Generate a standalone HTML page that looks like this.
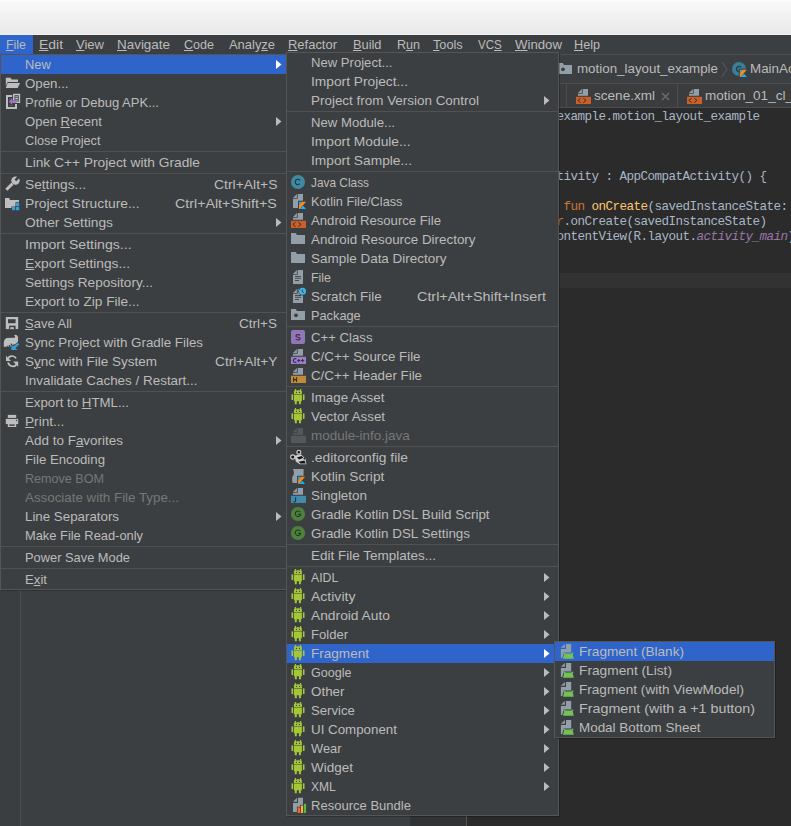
<!DOCTYPE html>
<html><head><meta charset="utf-8"><style>
html,body{margin:0;padding:0}
body{width:791px;height:826px;overflow:hidden;position:relative;background:#3c3f41}
.t{position:absolute;height:19px;line-height:19px;font-family:"Liberation Sans",sans-serif;font-size:13px;white-space:pre;transform-origin:0 0}
.t u{text-decoration:underline;text-decoration-thickness:1px;text-underline-offset:1px}
.code{position:absolute;left:472.5px;height:15px;line-height:15px;font-family:"Liberation Mono",monospace;font-size:12.6px;letter-spacing:-0.56px;white-space:pre;color:#a9b7c6}
</style></head><body>
<div style="position:absolute;left:0px;top:0px;width:791px;height:35px;background:linear-gradient(#fdfdfd 0px,#f9f9f9 2px,#e9e9e9 33px,#f0f0f0 34px,#f0f0f0 35px);"></div><div style="position:absolute;left:0px;top:35px;width:791px;height:20px;background:#3c3f41;"></div><div style="position:absolute;left:0px;top:54px;width:791px;height:1px;background:#4b4d4f;"></div><div style="position:absolute;left:0px;top:55px;width:410px;height:771px;background:#3c3f41;"></div><div style="position:absolute;left:20px;top:55px;width:1px;height:771px;background:#4a4c4e;"></div><div style="position:absolute;left:0px;top:55px;width:20px;height:771px;background:#3b3e40;"></div><div style="position:absolute;left:410px;top:55px;width:381px;height:28px;background:#3c3f41;"></div><div style="position:absolute;left:410px;top:83px;width:381px;height:1px;background:#4b4d4f;"></div><div style="position:absolute;left:410px;top:84px;width:381px;height:23px;background:#3a3c3e;"></div><div style="position:absolute;left:410px;top:107px;width:381px;height:1px;background:#4b4d4f;"></div><div style="position:absolute;left:410px;top:108px;width:56px;height:718px;background:#313335;"></div><div style="position:absolute;left:466px;top:108px;width:1px;height:718px;background:#555555;"></div><div style="position:absolute;left:467px;top:108px;width:324px;height:718px;background:#2b2b2b;"></div><div style="position:absolute;left:467px;top:273px;width:324px;height:15px;background:#323232;"></div><div style="position:absolute;left:566px;top:84px;width:1px;height:23px;background:#4b4d4f;"></div><div style="position:absolute;left:677px;top:84px;width:1px;height:23px;background:#4b4d4f;"></div><svg style="position:absolute;left:557px;top:61px;overflow:visible" width="16" height="16" viewBox="0 0 16 16"><path d="M1 1.9H5.9L6.9 3.9H15V12.9H1Z" fill="#939fa8"/><circle cx="6" cy="8.3" r="1.9" fill="#3c3f41"/></svg><div class="t" style="left:577px;top:59px;color:#bbbbbb;transform:scaleX(1.0269);">motion_layout_example</div><svg style="position:absolute;left:720px;top:61px" width="8" height="17"><path d="M2 1L7 8.4L2 15.7" fill="none" stroke="#5e6060" stroke-width="0.9"/></svg><svg style="position:absolute;left:731px;top:61px;overflow:visible" width="16" height="16" viewBox="0 0 16 16"><circle cx="8" cy="8" r="7" fill="#3b7f96"/><path d="M10 6.2A2.6 2.6 0 1 0 10 9.8" fill="none" stroke="#263c45" stroke-width="1.4"/><rect x="7.800000000000001" y="7.699999999999999" width="9" height="9.2" fill="#3c3f41"/><path d="M8.8 8.7H11.8L8.8 12.1Z" fill="#0fb5fd"/><path d="M11.8 8.7H15.8L9.600000000000001 15.899999999999999H8.8V12.1Z" fill="#f88a1e"/><path d="M9.600000000000001 15.899999999999999L13.0 12.7L15.8 15.899999999999999Z" fill="#0fb5fd"/></svg><div class="t" style="left:750px;top:59px;color:#bbbbbb;transform:scaleX(1.0300);">MainActivity</div><svg style="position:absolute;left:575px;top:88px;overflow:visible" width="16" height="16" viewBox="0 0 16 16"><path d="M3 4.9L6.9 1V4.9Z" fill="#939fa8"/><path d="M7.7 1H13V7.8H3V5.7H7.7Z" fill="#939fa8"/><rect x="1" y="8.8" width="15" height="7.2" fill="#c9602b"/><path d="M5.6 10.2L2.9 12.4L5.6 14.6M8.3 10.2L11 12.4L8.3 14.6" fill="none" stroke="#3b2418" stroke-width="0.9"/></svg><div class="t" style="left:594px;top:86px;color:#bbbbbb;transform:scaleX(1.0427);">scene.xml</div><svg style="position:absolute;left:661px;top:92px" width="9" height="9"><path d="M1 1L8 8M8 1L1 8" stroke="#6e7072" stroke-width="1.2"/></svg><svg style="position:absolute;left:686px;top:88px;overflow:visible" width="16" height="16" viewBox="0 0 16 16"><path d="M3 4.9L6.9 1V4.9Z" fill="#939fa8"/><path d="M7.7 1H13V7.8H3V5.7H7.7Z" fill="#939fa8"/><rect x="1" y="8.8" width="15" height="7.2" fill="#c9602b"/><path d="M5.6 10.2L2.9 12.4L5.6 14.6M8.3 10.2L11 12.4L8.3 14.6" fill="none" stroke="#3b2418" stroke-width="0.9"/></svg><div class="t" style="left:705px;top:86px;color:#bbbbbb;transform:scaleX(1.0400);">motion_01_cl_basic.xml</div><div class="code" style="top:110px"><span style="color:#cc7832">package </span>com.example.motion_layout_example</div><div class="code" style="top:170px"><span style="color:#cc7832">class </span>MainActivity : AppCompatActivity() {</div><div class="code" style="top:200px"><span style="color:#cc7832">    override fun </span><span style="color:#ffc66d">onCreate</span>(savedInstanceState: Bundle?) {</div><div class="code" style="top:215px"><span style="color:#cc7832">        super</span>.onCreate(savedInstanceState)</div><div class="code" style="top:230px">        setContentView(R.layout.<i style="color:#9876aa">activity_main</i>)</div><div style="position:absolute;left:0px;top:35px;width:33px;height:19px;background:#2f65ca;"></div><div class="t" style="left:6px;top:35px;color:#bbbbbb;transform:scaleX(0.9545);"><u>F</u>ile</div><div class="t" style="left:39px;top:35px;color:#bbbbbb;transform:scaleX(1.0711);"><u>E</u>dit</div><div class="t" style="left:76px;top:35px;color:#bbbbbb;transform:scaleX(1.0017);"><u>V</u>iew</div><div class="t" style="left:117px;top:35px;color:#bbbbbb;transform:scaleX(1.0329);"><u>N</u>avigate</div><div class="t" style="left:184px;top:35px;color:#bbbbbb;transform:scaleX(0.9653);"><u>C</u>ode</div><div class="t" style="left:229px;top:35px;color:#bbbbbb;transform:scaleX(0.9946);">Analy<u>z</u>e</div><div class="t" style="left:288px;top:35px;color:#bbbbbb;transform:scaleX(0.9971);"><u>R</u>efactor</div><div class="t" style="left:353px;top:35px;color:#bbbbbb;transform:scaleX(0.9854);"><u>B</u>uild</div><div class="t" style="left:397px;top:35px;color:#bbbbbb;transform:scaleX(0.9640);">R<u>u</u>n</div><div class="t" style="left:433px;top:35px;color:#bbbbbb;transform:scaleX(0.9783);"><u>T</u>ools</div><div class="t" style="left:478px;top:35px;color:#bbbbbb;transform:scaleX(0.8865);">VC<u>S</u></div><div class="t" style="left:515px;top:35px;color:#bbbbbb;transform:scaleX(1.0162);"><u>W</u>indow</div><div class="t" style="left:574px;top:35px;color:#bbbbbb;transform:scaleX(0.9720);"><u>H</u>elp</div><div style="position:absolute;left:0px;top:54px;width:285px;height:534px;background:#3c3f41;border:1px solid #555555;box-shadow:1px 1px 0 rgba(0,0,0,0.25)"></div><div style="position:absolute;left:1px;top:55px;width:285px;height:19px;background:#2f65ca;"></div><div class="t" style="left:25px;top:55px;color:#bbbbbb;transform:scaleX(0.9879);">New</div><svg style="position:absolute;left:276px;top:60px" width="6" height="9" viewBox="0 0 6 9"><path d="M0 0L5.5 4.5L0 9Z" fill="#ffffff"/></svg><svg style="position:absolute;left:5px;top:75px;overflow:visible" width="16" height="16" viewBox="0 0 16 16"><path d="M0.8 2.8H5.6L6.6 4.6H13V6.9H2.6L0.8 11Z" fill="#bebebe"/><path d="M2.6 7.9H15L12.7 13H0.8Z" fill="#bebebe"/></svg><div class="t" style="left:25px;top:74px;color:#bbbbbb;transform:scaleX(1.0202);">Open&#46;&#46;&#46;</div><svg style="position:absolute;left:5px;top:94px;overflow:visible" width="16" height="16" viewBox="0 0 16 16"><path fill-rule="evenodd" d="M1 1H12V15H1ZM3 3V13H10V3Z" fill="#bebebe"/><path d="M4 5H7M4 11.5H8" stroke="#5a5d5f" stroke-width="0.8"/><rect x="7.2" y="-1" width="9" height="11" fill="#3c3f41"/><path fill-rule="evenodd" d="M8 -0.3H15.2V9.1H8ZM9.5 1.2V7.6H13.7V1.2Z" fill="#bebebe"/><path d="M10.2 2.8H13M10.2 4.5H13M10.2 6.2H13" stroke="#bebebe" stroke-width="1"/><path d="M3.8 7.4L7.2 3.8V6H11.2V8.8H7.2V10.9Z" fill="#a06dc4"/></svg><div class="t" style="left:25px;top:93px;color:#bbbbbb;transform:scaleX(1.0023);">Profile or Debug APK&#46;&#46;&#46;</div><div class="t" style="left:25px;top:112px;color:#bbbbbb;transform:scaleX(1.0051);">Open <u>R</u>ecent</div><svg style="position:absolute;left:276px;top:117px" width="6" height="9" viewBox="0 0 6 9"><path d="M0 0L5.5 4.5L0 9Z" fill="#bbbbbb"/></svg><div class="t" style="left:25px;top:131px;color:#bbbbbb;transform:scaleX(0.9766);">Close Project</div><div style="position:absolute;left:1px;top:151px;width:285px;height:1px;background:#515151;"></div><div class="t" style="left:25px;top:153px;color:#bbbbbb;transform:scaleX(1.0576);">Link C++ Project with Gradle</div><div style="position:absolute;left:1px;top:173px;width:285px;height:1px;background:#515151;"></div><svg style="position:absolute;left:5px;top:176px;overflow:visible" width="16" height="16" viewBox="0 0 16 16"><path d="M1.3 13.8L7.5 7.6" stroke="#bebebe" stroke-width="2.9"/><circle cx="10.5" cy="4.6" r="4.2" fill="#bebebe"/><path d="M9.48 3.38L14.08 -1.22L15.92 0.62L11.32 5.22Z" fill="#3c3f41"/></svg><div class="t" style="left:25px;top:175px;color:#bbbbbb;transform:scaleX(1.0551);">Se<u>t</u>tings&#46;&#46;&#46;</div><div class="t" style="left:213.5px;top:175px;color:#bbbbbb;transform:scaleX(1.0717)">Ctrl+Alt+S</div><svg style="position:absolute;left:5px;top:195px;overflow:visible" width="16" height="16" viewBox="0 0 16 16"><path d="M0 3H4.2L5 5H14V7.3H10.5V11.5H6.5V13H0Z" fill="#bebebe"/><rect x="11" y="8" width="3.2" height="3.2" fill="#389fd6"/><rect x="7" y="12" width="3.2" height="3.2" fill="#389fd6"/><rect x="11" y="12" width="3.2" height="3.2" fill="#389fd6"/></svg><div class="t" style="left:25px;top:194px;color:#bbbbbb;transform:scaleX(1.0636);">Project Structure&#46;&#46;&#46;</div><div class="t" style="left:175.3px;top:194px;color:#bbbbbb;transform:scaleX(1.0952)">Ctrl+Alt+Shift+S</div><div class="t" style="left:25px;top:213px;color:#bbbbbb;transform:scaleX(1.0588);">Other Settings</div><svg style="position:absolute;left:276px;top:218px" width="6" height="9" viewBox="0 0 6 9"><path d="M0 0L5.5 4.5L0 9Z" fill="#bbbbbb"/></svg><div style="position:absolute;left:1px;top:233px;width:285px;height:1px;background:#515151;"></div><div class="t" style="left:25px;top:235px;color:#bbbbbb;transform:scaleX(1.0848);">Import Settings&#46;&#46;&#46;</div><div class="t" style="left:25px;top:254px;color:#bbbbbb;transform:scaleX(1.0606);"><u>E</u>xport Settings&#46;&#46;&#46;</div><div class="t" style="left:25px;top:273px;color:#bbbbbb;transform:scaleX(1.0441);">Settings Repository&#46;&#46;&#46;</div><div class="t" style="left:25px;top:292px;color:#bbbbbb;transform:scaleX(1.0496);">Export to Zip File&#46;&#46;&#46;</div><div style="position:absolute;left:1px;top:312px;width:285px;height:1px;background:#515151;"></div><svg style="position:absolute;left:5px;top:315px;overflow:visible" width="16" height="16" viewBox="0 0 16 16"><rect x="0.8" y="2" width="12.4" height="12.1" fill="#bebebe"/><rect x="3" y="4.2" width="7.6" height="4" fill="#3c3f41"/><rect x="4.1" y="10.7" width="6.5" height="3.4" fill="#3c3f41"/><rect x="5.2" y="12.2" width="3.6" height="1.9" fill="#bebebe"/></svg><div class="t" style="left:25px;top:314px;color:#bbbbbb;transform:scaleX(1.0003);"><u>S</u>ave All</div><div class="t" style="left:239.0px;top:314px;color:#bbbbbb;transform:scaleX(1.0415)">Ctrl+S</div><svg style="position:absolute;left:4px;top:334px;overflow:visible" width="16" height="16" viewBox="0 0 16 16"><path d="M-0.2 12.7L-0.2 8Q0 5 2.6 4L10.6 3.8Q11.3 3.2 11 2.2Q10.4 1.5 9.8 1.9Q10.8 0.5 12.3 0.9Q14.2 1.5 14.1 4L13.9 9L11.7 10.4L9.2 10.4V11.5L8 12.7H6.2V11H4.8V12.7H4L3.2 11.6L2.6 12.7Z" fill="#bebebe"/><path d="M7.4 10.4L9.5 12.4L13.6 8.8L15.2 10.4L11.3 14.2L13.6 15.9H7.4Z" fill="#389fd6" stroke="#3c3f41" stroke-width="1.2" paint-order="stroke"/></svg><div class="t" style="left:25px;top:333px;color:#bbbbbb;transform:scaleX(1.0265);">Sync Project with Gradle Files</div><svg style="position:absolute;left:5px;top:353px;overflow:visible" width="16" height="16" viewBox="0 0 16 16"><g transform="translate(0.5 0.4)"><path d="M2.6 9A4.7 4.7 0 0 0 11.3 10.6" fill="none" stroke="#bebebe" stroke-width="1.7"/><path d="M10.6 5A4.7 4.7 0 0 0 1.9 6.4" fill="none" stroke="#bebebe" stroke-width="1.7"/><path d="M0.5 2.3V7.6H5.6Z" fill="#bebebe"/><path d="M12.7 13.5V8.2H7.6Z" fill="#bebebe"/></g></svg><div class="t" style="left:25px;top:352px;color:#bbbbbb;transform:scaleX(1.0381);">S<u>y</u>nc with File System</div><div class="t" style="left:214.5px;top:352px;color:#bbbbbb;transform:scaleX(1.0549)">Ctrl+Alt+Y</div><div class="t" style="left:25px;top:371px;color:#bbbbbb;transform:scaleX(1.0334);">Invalidate Caches / Restart&#46;&#46;&#46;</div><div style="position:absolute;left:1px;top:391px;width:285px;height:1px;background:#515151;"></div><div class="t" style="left:25px;top:393px;color:#bbbbbb;transform:scaleX(1.0209);">Export to <u>H</u>TML&#46;&#46;&#46;</div><svg style="position:absolute;left:5px;top:413px;overflow:visible" width="16" height="16" viewBox="0 0 16 16"><rect x="2.8" y="1.9" width="8.4" height="3" fill="#bebebe"/><rect x="0.8" y="5.9" width="12.4" height="5.1" fill="#bebebe"/><rect x="2.8" y="10.5" width="8.4" height="3.5" fill="#bebebe"/><rect x="4.3" y="11.4" width="5.4" height="1.4" fill="#3c3f41"/><circle cx="11.5" cy="7.5" r="0.7" fill="#3c3f41"/></svg><div class="t" style="left:25px;top:412px;color:#bbbbbb;transform:scaleX(1.0485);"><u>P</u>rint&#46;&#46;&#46;</div><div class="t" style="left:25px;top:431px;color:#bbbbbb;transform:scaleX(1.0353);">Add to F<u>a</u>vorites</div><svg style="position:absolute;left:276px;top:436px" width="6" height="9" viewBox="0 0 6 9"><path d="M0 0L5.5 4.5L0 9Z" fill="#bbbbbb"/></svg><div class="t" style="left:25px;top:450px;color:#bbbbbb;transform:scaleX(1.0155);">File Encoding</div><div class="t" style="left:25px;top:469px;color:#777777;transform:scaleX(0.9677);">Remove BOM</div><div class="t" style="left:25px;top:488px;color:#777777;transform:scaleX(1.0263);">Associate with File Type&#46;&#46;&#46;</div><div class="t" style="left:25px;top:507px;color:#bbbbbb;transform:scaleX(1.0242);">Line Separators</div><svg style="position:absolute;left:276px;top:512px" width="6" height="9" viewBox="0 0 6 9"><path d="M0 0L5.5 4.5L0 9Z" fill="#bbbbbb"/></svg><div class="t" style="left:25px;top:526px;color:#bbbbbb;transform:scaleX(0.9898);">Make File Read-only</div><div style="position:absolute;left:1px;top:546px;width:285px;height:1px;background:#515151;"></div><div class="t" style="left:25px;top:548px;color:#bbbbbb;transform:scaleX(0.9884);">Power Save Mode</div><div style="position:absolute;left:1px;top:568px;width:285px;height:1px;background:#515151;"></div><div class="t" style="left:25px;top:570px;color:#bbbbbb;transform:scaleX(1.0151);">E<u>x</u>it</div><div style="position:absolute;left:286px;top:52px;width:271px;height:762px;background:#3c3f41;border:1px solid #555555;box-shadow:1px 1px 0 rgba(0,0,0,0.25)"></div><div class="t" style="left:311px;top:53px;color:#bbbbbb;transform:scaleX(1.0071);">New Project&#46;&#46;&#46;</div><div class="t" style="left:311px;top:72px;color:#bbbbbb;transform:scaleX(1.0572);">Import Project&#46;&#46;&#46;</div><div class="t" style="left:311px;top:91px;color:#bbbbbb;transform:scaleX(1.0333);">Project from Version Control</div><svg style="position:absolute;left:544px;top:96px" width="6" height="9" viewBox="0 0 6 9"><path d="M0 0L5.5 4.5L0 9Z" fill="#bbbbbb"/></svg><div style="position:absolute;left:287px;top:111px;width:271px;height:1px;background:#515151;"></div><div class="t" style="left:311px;top:113px;color:#bbbbbb;transform:scaleX(1.0109);">New Module&#46;&#46;&#46;</div><div class="t" style="left:311px;top:132px;color:#bbbbbb;transform:scaleX(1.0592);">Import Module&#46;&#46;&#46;</div><div class="t" style="left:311px;top:151px;color:#bbbbbb;transform:scaleX(1.0590);">Import Sample&#46;&#46;&#46;</div><div style="position:absolute;left:287px;top:171px;width:271px;height:1px;background:#515151;"></div><svg style="position:absolute;left:290px;top:174px;overflow:visible" width="16" height="16" viewBox="0 0 16 16"><circle cx="8" cy="8" r="7" fill="#3f8aa2"/><path d="M9.9 6.3A2.6 2.7 0 1 0 9.9 9.7" fill="none" stroke="#1f3a44" stroke-width="1.15"/></svg><div class="t" style="left:311px;top:173px;color:#bbbbbb;transform:scaleX(0.9123);">Java Class</div><svg style="position:absolute;left:290px;top:193px;overflow:visible" width="16" height="16" viewBox="0 0 16 16"><path d="M3 4.9L6.9 1V4.9Z" fill="#939fa8"/><path d="M7.7 1H13V15H3V5.7H7.7Z" fill="#939fa8"/><rect x="8" y="7.699999999999999" width="9" height="9.2" fill="#3c3f41"/><path d="M9 8.7H12L9 12.1Z" fill="#0fb5fd"/><path d="M12 8.7H16L9.8 15.899999999999999H9V12.1Z" fill="#f88a1e"/><path d="M9.8 15.899999999999999L13.2 12.7L16 15.899999999999999Z" fill="#0fb5fd"/></svg><div class="t" style="left:311px;top:192px;color:#bbbbbb;transform:scaleX(0.9817);">Kotlin File/Class</div><svg style="position:absolute;left:290px;top:212px;overflow:visible" width="16" height="16" viewBox="0 0 16 16"><path d="M3 4.9L6.9 1V4.9Z" fill="#939fa8"/><path d="M7.7 1H13V7.8H3V5.7H7.7Z" fill="#939fa8"/><rect x="1" y="8.8" width="15" height="7.2" fill="#c9602b"/><path d="M5.6 10.2L2.9 12.4L5.6 14.6M8.3 10.2L11 12.4L8.3 14.6" fill="none" stroke="#3b2418" stroke-width="0.9"/></svg><div class="t" style="left:311px;top:211px;color:#bbbbbb;transform:scaleX(1.0107);">Android Resource File</div><svg style="position:absolute;left:290px;top:231px;overflow:visible" width="16" height="16" viewBox="0 0 16 16"><path d="M1 1.9H5.9L6.9 3.9H15V12.9H1Z" fill="#939fa8"/></svg><div class="t" style="left:311px;top:230px;color:#bbbbbb;transform:scaleX(1.0301);">Android Resource Directory</div><svg style="position:absolute;left:290px;top:250px;overflow:visible" width="16" height="16" viewBox="0 0 16 16"><path d="M1 1.9H5.9L6.9 3.9H15V12.9H1Z" fill="#939fa8"/></svg><div class="t" style="left:311px;top:249px;color:#bbbbbb;transform:scaleX(1.0361);">Sample Data Directory</div><svg style="position:absolute;left:290px;top:269px;overflow:visible" width="16" height="16" viewBox="0 0 16 16"><path d="M3 4.9L6.9 1V4.9Z" fill="#939fa8"/><path d="M7.7 1H13V15H3V5.7H7.7Z" fill="#939fa8"/><path d="M5 7.5H11M5 9.3H11M5 11.5H9" stroke="#3c3f41" stroke-width="0.9"/></svg><div class="t" style="left:311px;top:268px;color:#bbbbbb;transform:scaleX(0.9545);">File</div><svg style="position:absolute;left:290px;top:288px;overflow:visible" width="16" height="16" viewBox="0 0 16 16"><path d="M3 4.9L6.9 1V4.9Z" fill="#939fa8"/><path d="M7.7 1H13V15H3V5.7H7.7Z" fill="#939fa8"/><path d="M5 7.5H11M5 9.3H11M5 11.5H9" stroke="#3c3f41" stroke-width="0.9"/><circle cx="12.5" cy="3.3" r="4.2" fill="#3c3f41"/><circle cx="12.5" cy="3.3" r="3.5" fill="#40b6e0"/><path d="M12.3 1.5V3.6L13.8 4.6" fill="none" stroke="#1d3440" stroke-width="0.9"/></svg><div class="t" style="left:311px;top:287px;color:#bbbbbb;transform:scaleX(1.0300);">Scratch File</div><div class="t" style="left:417.0px;top:287px;color:#bbbbbb;transform:scaleX(1.1054)">Ctrl+Alt+Shift+Insert</div><svg style="position:absolute;left:290px;top:307px;overflow:visible" width="16" height="16" viewBox="0 0 16 16"><path d="M1 1.9H5.9L6.9 3.9H15V12.9H1Z" fill="#939fa8"/><circle cx="6" cy="8.3" r="1.9" fill="#3c3f41"/></svg><div class="t" style="left:311px;top:306px;color:#bbbbbb;transform:scaleX(0.9823);">Package</div><div style="position:absolute;left:287px;top:326px;width:271px;height:1px;background:#515151;"></div><svg style="position:absolute;left:290px;top:329px;overflow:visible" width="16" height="16" viewBox="0 0 16 16"><rect x="1" y="1" width="14" height="14" rx="2" fill="#9277b8"/><path d="M10.1 6.4Q9.5 5.6 8 5.6Q5.9 5.6 5.9 7Q5.9 8.1 8 8.3Q10.2 8.5 10.2 9.6Q10.2 10.9 8 10.9Q6.3 10.9 5.7 10" fill="none" stroke="#3a2b4f" stroke-width="1.15"/></svg><div class="t" style="left:311px;top:328px;color:#bbbbbb;transform:scaleX(1.0131);">C++ Class</div><svg style="position:absolute;left:290px;top:348px;overflow:visible" width="16" height="16" viewBox="0 0 16 16"><path d="M3 4.9L6.9 1V4.9Z" fill="#939fa8"/><path d="M7.7 1H13V7.8H3V5.7H7.7Z" fill="#939fa8"/><rect x="1" y="8.8" width="15" height="7.2" fill="#9b80c8"/><path d="M6.4 11.2A1.8 1.9 0 1 0 6.4 13.9" fill="none" stroke="#3b2e4a" stroke-width="1.2"/><path d="M7.2 12.6H10.4M8.8 11V14.2M11 12.6H14.2M12.6 11V14.2" stroke="#3b2e4a" stroke-width="1"/></svg><div class="t" style="left:311px;top:347px;color:#bbbbbb;transform:scaleX(1.0240);">C/C++ Source File</div><svg style="position:absolute;left:290px;top:367px;overflow:visible" width="16" height="16" viewBox="0 0 16 16"><path d="M3 4.9L6.9 1V4.9Z" fill="#939fa8"/><path d="M7.7 1H13V7.8H3V5.7H7.7Z" fill="#939fa8"/><rect x="1" y="8.8" width="15" height="7.2" fill="#bf8a3a"/><path d="M3.6 10.3V14.9M6.5 10.3V14.9M3.6 12.6H6.5" stroke="#3f2d10" stroke-width="1.1"/></svg><div class="t" style="left:311px;top:366px;color:#bbbbbb;transform:scaleX(1.0241);">C/C++ Header File</div><div style="position:absolute;left:287px;top:386px;width:271px;height:1px;background:#515151;"></div><svg style="position:absolute;left:290px;top:389px;overflow:visible" width="16" height="16" viewBox="0 0 16 16"><rect x="4.8" y="0" width="1.3" height="2.4" fill="#a4c639"/><rect x="9.9" y="0" width="1.3" height="2.4" fill="#a4c639"/><path d="M3.9 5.1V2.6Q3.9 1.5 5 1.5H7L8 1H8.2L9 1.5H10.8Q11.9 1.5 11.9 2.6V5.1Z" fill="#a4c639"/><circle cx="6.5" cy="3.4" r="0.6" fill="#3c3f41"/><circle cx="9.5" cy="3.4" r="0.6" fill="#3c3f41"/><path d="M3.9 5.6H11.9V12.2H10.9V15.2H8.9V12.2H6.8V15.2H4.8V12.2H3.9Z" fill="#a4c639"/><rect x="1.5" y="5.2" width="1.6" height="5.8" rx="0.5" fill="#a4c639"/><rect x="12.9" y="5.2" width="1.6" height="5.8" rx="0.5" fill="#a4c639"/></svg><div class="t" style="left:311px;top:388px;color:#bbbbbb;transform:scaleX(1.0259);">Image Asset</div><svg style="position:absolute;left:290px;top:408px;overflow:visible" width="16" height="16" viewBox="0 0 16 16"><rect x="4.8" y="0" width="1.3" height="2.4" fill="#a4c639"/><rect x="9.9" y="0" width="1.3" height="2.4" fill="#a4c639"/><path d="M3.9 5.1V2.6Q3.9 1.5 5 1.5H7L8 1H8.2L9 1.5H10.8Q11.9 1.5 11.9 2.6V5.1Z" fill="#a4c639"/><circle cx="6.5" cy="3.4" r="0.6" fill="#3c3f41"/><circle cx="9.5" cy="3.4" r="0.6" fill="#3c3f41"/><path d="M3.9 5.6H11.9V12.2H10.9V15.2H8.9V12.2H6.8V15.2H4.8V12.2H3.9Z" fill="#a4c639"/><rect x="1.5" y="5.2" width="1.6" height="5.8" rx="0.5" fill="#a4c639"/><rect x="12.9" y="5.2" width="1.6" height="5.8" rx="0.5" fill="#a4c639"/></svg><div class="t" style="left:311px;top:407px;color:#bbbbbb;transform:scaleX(1.0240);">Vector Asset</div><svg style="position:absolute;left:290px;top:427px;overflow:visible" width="16" height="16" viewBox="0 0 16 16"><path d="M3 4.9L6.9 1V4.9Z" fill="#55585a"/><path d="M7.7 1H13V7.8H3V5.7H7.7Z" fill="#55585a"/><rect x="1" y="8.8" width="15" height="7.2" fill="#55585a"/></svg><div class="t" style="left:311px;top:426px;color:#777777;transform:scaleX(1.0347);">module-info.java</div><div style="position:absolute;left:287px;top:446px;width:271px;height:1px;background:#515151;"></div><svg style="position:absolute;left:290px;top:449px;overflow:visible" width="16" height="16" viewBox="0 0 16 16"><path d="M4.6 6.8L10.8 5.2L15.4 9.4L16.4 15.2L9.8 15.3L5.8 12.6Z" fill="#cfcfcf"/><circle cx="2.7" cy="8" r="2.1" fill="#151515" stroke="#c8c8c8" stroke-width="1.2"/><circle cx="8.8" cy="3.3" r="1.9" fill="#151515" stroke="#c8c8c8" stroke-width="1.2"/><path d="M6.8 8.6L11.6 7L13.4 8.8L9.2 10.6Z" fill="#151515"/><path d="M8.6 12.8L14.4 11.4L15.8 14.4H10.4Z" fill="#151515"/><circle cx="14.4" cy="9.6" r="0.9" fill="#151515"/></svg><div class="t" style="left:311px;top:448px;color:#bbbbbb;transform:scaleX(1.0652);">.editorconfig file</div><svg style="position:absolute;left:290px;top:467px;overflow:visible" width="16" height="16" viewBox="0 0 16 16"><path d="M2.8 1.9H13.6V9H7.9V16H3.4Q2.2 16 2.2 14.6V11.2Q2.2 9.6 3.3 8.3Q4.2 7 3.8 4.6Q3.5 3 2.8 1.9Z" fill="#939fa8"/><rect x="7.1" y="8.8" width="9" height="9.2" fill="#3c3f41"/><path d="M8.1 9.8H11.1L8.1 13.200000000000001Z" fill="#0fb5fd"/><path d="M11.1 9.8H15.1L8.9 17.0H8.1V13.200000000000001Z" fill="#f88a1e"/><path d="M8.9 17.0L12.3 13.8L15.1 17.0Z" fill="#0fb5fd"/></svg><div class="t" style="left:311px;top:467px;color:#bbbbbb;transform:scaleX(1.0580);">Kotlin Script</div><svg style="position:absolute;left:290px;top:487px;overflow:visible" width="16" height="16" viewBox="0 0 16 16"><path d="M3 4.9L6.9 1V4.9Z" fill="#939fa8"/><path d="M7.7 1H13V7.8H3V5.7H7.7Z" fill="#939fa8"/><rect x="1" y="8.8" width="15" height="7.2" fill="#3f8cac"/><path d="M5.6 10.3V13.8Q5.6 14.9 4.5 14.9H3.4" fill="none" stroke="#1d3440" stroke-width="1.1"/></svg><div class="t" style="left:311px;top:486px;color:#bbbbbb;transform:scaleX(1.0329);">Singleton</div><svg style="position:absolute;left:290px;top:506px;overflow:visible" width="16" height="16" viewBox="0 0 16 16"><circle cx="8" cy="8" r="7.1" fill="#4e8040"/><path d="M10.3 6.1A2.75 2.75 0 1 0 10.75 8.3H8.2" fill="none" stroke="#243a1d" stroke-width="1.15"/></svg><div class="t" style="left:311px;top:505px;color:#bbbbbb;transform:scaleX(1.0327);">Gradle Kotlin DSL Build Script</div><svg style="position:absolute;left:290px;top:525px;overflow:visible" width="16" height="16" viewBox="0 0 16 16"><circle cx="8" cy="8" r="7.1" fill="#4e8040"/><path d="M10.3 6.1A2.75 2.75 0 1 0 10.75 8.3H8.2" fill="none" stroke="#243a1d" stroke-width="1.15"/></svg><div class="t" style="left:311px;top:524px;color:#bbbbbb;transform:scaleX(1.0314);">Gradle Kotlin DSL Settings</div><div style="position:absolute;left:287px;top:544px;width:271px;height:1px;background:#515151;"></div><div class="t" style="left:311px;top:546px;color:#bbbbbb;transform:scaleX(1.0380);">Edit File Templates&#46;&#46;&#46;</div><div style="position:absolute;left:287px;top:566px;width:271px;height:1px;background:#515151;"></div><svg style="position:absolute;left:290px;top:569px;overflow:visible" width="16" height="16" viewBox="0 0 16 16"><rect x="4.8" y="0" width="1.3" height="2.4" fill="#a4c639"/><rect x="9.9" y="0" width="1.3" height="2.4" fill="#a4c639"/><path d="M3.9 5.1V2.6Q3.9 1.5 5 1.5H7L8 1H8.2L9 1.5H10.8Q11.9 1.5 11.9 2.6V5.1Z" fill="#a4c639"/><circle cx="6.5" cy="3.4" r="0.6" fill="#3c3f41"/><circle cx="9.5" cy="3.4" r="0.6" fill="#3c3f41"/><path d="M3.9 5.6H11.9V12.2H10.9V15.2H8.9V12.2H6.8V15.2H4.8V12.2H3.9Z" fill="#a4c639"/><rect x="1.5" y="5.2" width="1.6" height="5.8" rx="0.5" fill="#a4c639"/><rect x="12.9" y="5.2" width="1.6" height="5.8" rx="0.5" fill="#a4c639"/></svg><div class="t" style="left:311px;top:568px;color:#bbbbbb;transform:scaleX(0.9444);">AIDL</div><svg style="position:absolute;left:544px;top:573px" width="6" height="9" viewBox="0 0 6 9"><path d="M0 0L5.5 4.5L0 9Z" fill="#bbbbbb"/></svg><svg style="position:absolute;left:290px;top:588px;overflow:visible" width="16" height="16" viewBox="0 0 16 16"><rect x="4.8" y="0" width="1.3" height="2.4" fill="#a4c639"/><rect x="9.9" y="0" width="1.3" height="2.4" fill="#a4c639"/><path d="M3.9 5.1V2.6Q3.9 1.5 5 1.5H7L8 1H8.2L9 1.5H10.8Q11.9 1.5 11.9 2.6V5.1Z" fill="#a4c639"/><circle cx="6.5" cy="3.4" r="0.6" fill="#3c3f41"/><circle cx="9.5" cy="3.4" r="0.6" fill="#3c3f41"/><path d="M3.9 5.6H11.9V12.2H10.9V15.2H8.9V12.2H6.8V15.2H4.8V12.2H3.9Z" fill="#a4c639"/><rect x="1.5" y="5.2" width="1.6" height="5.8" rx="0.5" fill="#a4c639"/><rect x="12.9" y="5.2" width="1.6" height="5.8" rx="0.5" fill="#a4c639"/></svg><div class="t" style="left:311px;top:587px;color:#bbbbbb;transform:scaleX(1.0784);">Activity</div><svg style="position:absolute;left:544px;top:592px" width="6" height="9" viewBox="0 0 6 9"><path d="M0 0L5.5 4.5L0 9Z" fill="#bbbbbb"/></svg><svg style="position:absolute;left:290px;top:607px;overflow:visible" width="16" height="16" viewBox="0 0 16 16"><rect x="4.8" y="0" width="1.3" height="2.4" fill="#a4c639"/><rect x="9.9" y="0" width="1.3" height="2.4" fill="#a4c639"/><path d="M3.9 5.1V2.6Q3.9 1.5 5 1.5H7L8 1H8.2L9 1.5H10.8Q11.9 1.5 11.9 2.6V5.1Z" fill="#a4c639"/><circle cx="6.5" cy="3.4" r="0.6" fill="#3c3f41"/><circle cx="9.5" cy="3.4" r="0.6" fill="#3c3f41"/><path d="M3.9 5.6H11.9V12.2H10.9V15.2H8.9V12.2H6.8V15.2H4.8V12.2H3.9Z" fill="#a4c639"/><rect x="1.5" y="5.2" width="1.6" height="5.8" rx="0.5" fill="#a4c639"/><rect x="12.9" y="5.2" width="1.6" height="5.8" rx="0.5" fill="#a4c639"/></svg><div class="t" style="left:311px;top:606px;color:#bbbbbb;transform:scaleX(1.0611);">Android Auto</div><svg style="position:absolute;left:544px;top:611px" width="6" height="9" viewBox="0 0 6 9"><path d="M0 0L5.5 4.5L0 9Z" fill="#bbbbbb"/></svg><svg style="position:absolute;left:290px;top:626px;overflow:visible" width="16" height="16" viewBox="0 0 16 16"><rect x="4.8" y="0" width="1.3" height="2.4" fill="#a4c639"/><rect x="9.9" y="0" width="1.3" height="2.4" fill="#a4c639"/><path d="M3.9 5.1V2.6Q3.9 1.5 5 1.5H7L8 1H8.2L9 1.5H10.8Q11.9 1.5 11.9 2.6V5.1Z" fill="#a4c639"/><circle cx="6.5" cy="3.4" r="0.6" fill="#3c3f41"/><circle cx="9.5" cy="3.4" r="0.6" fill="#3c3f41"/><path d="M3.9 5.6H11.9V12.2H10.9V15.2H8.9V12.2H6.8V15.2H4.8V12.2H3.9Z" fill="#a4c639"/><rect x="1.5" y="5.2" width="1.6" height="5.8" rx="0.5" fill="#a4c639"/><rect x="12.9" y="5.2" width="1.6" height="5.8" rx="0.5" fill="#a4c639"/></svg><div class="t" style="left:311px;top:625px;color:#bbbbbb;transform:scaleX(1.0038);">Folder</div><svg style="position:absolute;left:544px;top:630px" width="6" height="9" viewBox="0 0 6 9"><path d="M0 0L5.5 4.5L0 9Z" fill="#bbbbbb"/></svg><div style="position:absolute;left:287px;top:644px;width:271px;height:19px;background:#2f65ca;"></div><svg style="position:absolute;left:290px;top:645px;overflow:visible" width="16" height="16" viewBox="0 0 16 16"><rect x="4.8" y="0" width="1.3" height="2.4" fill="#a4c639"/><rect x="9.9" y="0" width="1.3" height="2.4" fill="#a4c639"/><path d="M3.9 5.1V2.6Q3.9 1.5 5 1.5H7L8 1H8.2L9 1.5H10.8Q11.9 1.5 11.9 2.6V5.1Z" fill="#a4c639"/><circle cx="6.5" cy="3.4" r="0.6" fill="#3c3f41"/><circle cx="9.5" cy="3.4" r="0.6" fill="#3c3f41"/><path d="M3.9 5.6H11.9V12.2H10.9V15.2H8.9V12.2H6.8V15.2H4.8V12.2H3.9Z" fill="#a4c639"/><rect x="1.5" y="5.2" width="1.6" height="5.8" rx="0.5" fill="#a4c639"/><rect x="12.9" y="5.2" width="1.6" height="5.8" rx="0.5" fill="#a4c639"/></svg><div class="t" style="left:311px;top:644px;color:#bbbbbb;transform:scaleX(1.0424);">Fragment</div><svg style="position:absolute;left:544px;top:649px" width="6" height="9" viewBox="0 0 6 9"><path d="M0 0L5.5 4.5L0 9Z" fill="#ffffff"/></svg><svg style="position:absolute;left:290px;top:664px;overflow:visible" width="16" height="16" viewBox="0 0 16 16"><rect x="4.8" y="0" width="1.3" height="2.4" fill="#a4c639"/><rect x="9.9" y="0" width="1.3" height="2.4" fill="#a4c639"/><path d="M3.9 5.1V2.6Q3.9 1.5 5 1.5H7L8 1H8.2L9 1.5H10.8Q11.9 1.5 11.9 2.6V5.1Z" fill="#a4c639"/><circle cx="6.5" cy="3.4" r="0.6" fill="#3c3f41"/><circle cx="9.5" cy="3.4" r="0.6" fill="#3c3f41"/><path d="M3.9 5.6H11.9V12.2H10.9V15.2H8.9V12.2H6.8V15.2H4.8V12.2H3.9Z" fill="#a4c639"/><rect x="1.5" y="5.2" width="1.6" height="5.8" rx="0.5" fill="#a4c639"/><rect x="12.9" y="5.2" width="1.6" height="5.8" rx="0.5" fill="#a4c639"/></svg><div class="t" style="left:311px;top:663px;color:#bbbbbb;transform:scaleX(0.9661);">Google</div><svg style="position:absolute;left:544px;top:668px" width="6" height="9" viewBox="0 0 6 9"><path d="M0 0L5.5 4.5L0 9Z" fill="#bbbbbb"/></svg><svg style="position:absolute;left:290px;top:683px;overflow:visible" width="16" height="16" viewBox="0 0 16 16"><rect x="4.8" y="0" width="1.3" height="2.4" fill="#a4c639"/><rect x="9.9" y="0" width="1.3" height="2.4" fill="#a4c639"/><path d="M3.9 5.1V2.6Q3.9 1.5 5 1.5H7L8 1H8.2L9 1.5H10.8Q11.9 1.5 11.9 2.6V5.1Z" fill="#a4c639"/><circle cx="6.5" cy="3.4" r="0.6" fill="#3c3f41"/><circle cx="9.5" cy="3.4" r="0.6" fill="#3c3f41"/><path d="M3.9 5.6H11.9V12.2H10.9V15.2H8.9V12.2H6.8V15.2H4.8V12.2H3.9Z" fill="#a4c639"/><rect x="1.5" y="5.2" width="1.6" height="5.8" rx="0.5" fill="#a4c639"/><rect x="12.9" y="5.2" width="1.6" height="5.8" rx="0.5" fill="#a4c639"/></svg><div class="t" style="left:311px;top:682px;color:#bbbbbb;transform:scaleX(1.0303);">Other</div><svg style="position:absolute;left:544px;top:687px" width="6" height="9" viewBox="0 0 6 9"><path d="M0 0L5.5 4.5L0 9Z" fill="#bbbbbb"/></svg><svg style="position:absolute;left:290px;top:702px;overflow:visible" width="16" height="16" viewBox="0 0 16 16"><rect x="4.8" y="0" width="1.3" height="2.4" fill="#a4c639"/><rect x="9.9" y="0" width="1.3" height="2.4" fill="#a4c639"/><path d="M3.9 5.1V2.6Q3.9 1.5 5 1.5H7L8 1H8.2L9 1.5H10.8Q11.9 1.5 11.9 2.6V5.1Z" fill="#a4c639"/><circle cx="6.5" cy="3.4" r="0.6" fill="#3c3f41"/><circle cx="9.5" cy="3.4" r="0.6" fill="#3c3f41"/><path d="M3.9 5.6H11.9V12.2H10.9V15.2H8.9V12.2H6.8V15.2H4.8V12.2H3.9Z" fill="#a4c639"/><rect x="1.5" y="5.2" width="1.6" height="5.8" rx="0.5" fill="#a4c639"/><rect x="12.9" y="5.2" width="1.6" height="5.8" rx="0.5" fill="#a4c639"/></svg><div class="t" style="left:311px;top:701px;color:#bbbbbb;transform:scaleX(1.0102);">Service</div><svg style="position:absolute;left:544px;top:706px" width="6" height="9" viewBox="0 0 6 9"><path d="M0 0L5.5 4.5L0 9Z" fill="#bbbbbb"/></svg><svg style="position:absolute;left:290px;top:721px;overflow:visible" width="16" height="16" viewBox="0 0 16 16"><rect x="4.8" y="0" width="1.3" height="2.4" fill="#a4c639"/><rect x="9.9" y="0" width="1.3" height="2.4" fill="#a4c639"/><path d="M3.9 5.1V2.6Q3.9 1.5 5 1.5H7L8 1H8.2L9 1.5H10.8Q11.9 1.5 11.9 2.6V5.1Z" fill="#a4c639"/><circle cx="6.5" cy="3.4" r="0.6" fill="#3c3f41"/><circle cx="9.5" cy="3.4" r="0.6" fill="#3c3f41"/><path d="M3.9 5.6H11.9V12.2H10.9V15.2H8.9V12.2H6.8V15.2H4.8V12.2H3.9Z" fill="#a4c639"/><rect x="1.5" y="5.2" width="1.6" height="5.8" rx="0.5" fill="#a4c639"/><rect x="12.9" y="5.2" width="1.6" height="5.8" rx="0.5" fill="#a4c639"/></svg><div class="t" style="left:311px;top:720px;color:#bbbbbb;transform:scaleX(1.0259);">UI Component</div><svg style="position:absolute;left:544px;top:725px" width="6" height="9" viewBox="0 0 6 9"><path d="M0 0L5.5 4.5L0 9Z" fill="#bbbbbb"/></svg><svg style="position:absolute;left:290px;top:740px;overflow:visible" width="16" height="16" viewBox="0 0 16 16"><rect x="4.8" y="0" width="1.3" height="2.4" fill="#a4c639"/><rect x="9.9" y="0" width="1.3" height="2.4" fill="#a4c639"/><path d="M3.9 5.1V2.6Q3.9 1.5 5 1.5H7L8 1H8.2L9 1.5H10.8Q11.9 1.5 11.9 2.6V5.1Z" fill="#a4c639"/><circle cx="6.5" cy="3.4" r="0.6" fill="#3c3f41"/><circle cx="9.5" cy="3.4" r="0.6" fill="#3c3f41"/><path d="M3.9 5.6H11.9V12.2H10.9V15.2H8.9V12.2H6.8V15.2H4.8V12.2H3.9Z" fill="#a4c639"/><rect x="1.5" y="5.2" width="1.6" height="5.8" rx="0.5" fill="#a4c639"/><rect x="12.9" y="5.2" width="1.6" height="5.8" rx="0.5" fill="#a4c639"/></svg><div class="t" style="left:311px;top:739px;color:#bbbbbb;transform:scaleX(0.9926);">Wear</div><svg style="position:absolute;left:544px;top:744px" width="6" height="9" viewBox="0 0 6 9"><path d="M0 0L5.5 4.5L0 9Z" fill="#bbbbbb"/></svg><svg style="position:absolute;left:290px;top:759px;overflow:visible" width="16" height="16" viewBox="0 0 16 16"><rect x="4.8" y="0" width="1.3" height="2.4" fill="#a4c639"/><rect x="9.9" y="0" width="1.3" height="2.4" fill="#a4c639"/><path d="M3.9 5.1V2.6Q3.9 1.5 5 1.5H7L8 1H8.2L9 1.5H10.8Q11.9 1.5 11.9 2.6V5.1Z" fill="#a4c639"/><circle cx="6.5" cy="3.4" r="0.6" fill="#3c3f41"/><circle cx="9.5" cy="3.4" r="0.6" fill="#3c3f41"/><path d="M3.9 5.6H11.9V12.2H10.9V15.2H8.9V12.2H6.8V15.2H4.8V12.2H3.9Z" fill="#a4c639"/><rect x="1.5" y="5.2" width="1.6" height="5.8" rx="0.5" fill="#a4c639"/><rect x="12.9" y="5.2" width="1.6" height="5.8" rx="0.5" fill="#a4c639"/></svg><div class="t" style="left:311px;top:758px;color:#bbbbbb;transform:scaleX(1.0378);">Widget</div><svg style="position:absolute;left:544px;top:763px" width="6" height="9" viewBox="0 0 6 9"><path d="M0 0L5.5 4.5L0 9Z" fill="#bbbbbb"/></svg><svg style="position:absolute;left:290px;top:778px;overflow:visible" width="16" height="16" viewBox="0 0 16 16"><rect x="4.8" y="0" width="1.3" height="2.4" fill="#a4c639"/><rect x="9.9" y="0" width="1.3" height="2.4" fill="#a4c639"/><path d="M3.9 5.1V2.6Q3.9 1.5 5 1.5H7L8 1H8.2L9 1.5H10.8Q11.9 1.5 11.9 2.6V5.1Z" fill="#a4c639"/><circle cx="6.5" cy="3.4" r="0.6" fill="#3c3f41"/><circle cx="9.5" cy="3.4" r="0.6" fill="#3c3f41"/><path d="M3.9 5.6H11.9V12.2H10.9V15.2H8.9V12.2H6.8V15.2H4.8V12.2H3.9Z" fill="#a4c639"/><rect x="1.5" y="5.2" width="1.6" height="5.8" rx="0.5" fill="#a4c639"/><rect x="12.9" y="5.2" width="1.6" height="5.8" rx="0.5" fill="#a4c639"/></svg><div class="t" style="left:311px;top:777px;color:#bbbbbb;transform:scaleX(0.9239);">XML</div><svg style="position:absolute;left:544px;top:782px" width="6" height="9" viewBox="0 0 6 9"><path d="M0 0L5.5 4.5L0 9Z" fill="#bbbbbb"/></svg><svg style="position:absolute;left:290px;top:797px;overflow:visible" width="16" height="16" viewBox="0 0 16 16"><path d="M3 4.8L7 0.8V4.8Z" fill="#939fa8"/><path d="M8 0.8H13V15H3V6H8Z" fill="#939fa8"/><rect x="7.8" y="10.6" width="2.2" height="5.4" fill="#f26522" stroke="#3c3f41" stroke-width="1.8" paint-order="stroke"/><rect x="10.9" y="8.7" width="2.2" height="7.3" fill="#f4af3d" stroke="#3c3f41" stroke-width="1.8" paint-order="stroke"/><rect x="13.9" y="6.8" width="2.2" height="9.2" fill="#62b543" stroke="#3c3f41" stroke-width="1.8" paint-order="stroke"/><rect x="7.8" y="10.6" width="2.2" height="5.4" fill="#f26522"/><rect x="10.9" y="8.7" width="2.2" height="7.3" fill="#f4af3d"/></svg><div class="t" style="left:311px;top:796px;color:#bbbbbb;transform:scaleX(1.0027);">Resource Bundle</div><div style="position:absolute;left:554px;top:641px;width:219px;height:95px;background:#3c3f41;border:1px solid #555555;box-shadow:1px 1px 0 rgba(0,0,0,0.25)"></div><div style="position:absolute;left:555px;top:642px;width:219px;height:19px;background:#2f65ca;"></div><svg style="position:absolute;left:559px;top:643px;overflow:visible" width="16" height="16" viewBox="0 0 16 16"><path d="M1.9 4.8L5.9 0.9V4.8Z" fill="#939fa8"/><path d="M7 0.9H12.2V15H1.9V6H7Z" fill="#939fa8"/><path d="M3 16.6L4.6 9.6H14.2L15.8 16.6Z" fill="#2f65ca"/><path d="M4 15.8L5.1 11.4Q5.3 10.6 6.2 10.6H12.6Q13.5 10.6 13.7 11.4L14.8 15.8Z" fill="#74c15a"/><circle cx="5.3" cy="10.6" r="0.9" fill="#74c15a"/><circle cx="13.5" cy="10.4" r="0.9" fill="#74c15a"/></svg><div class="t" style="left:579px;top:642px;color:#bbbbbb;transform:scaleX(1.0456);">Fragment (Blank)</div><svg style="position:absolute;left:559px;top:662px;overflow:visible" width="16" height="16" viewBox="0 0 16 16"><path d="M1.9 4.8L5.9 0.9V4.8Z" fill="#939fa8"/><path d="M7 0.9H12.2V15H1.9V6H7Z" fill="#939fa8"/><path d="M3 16.6L4.6 9.6H14.2L15.8 16.6Z" fill="#3c3f41"/><path d="M4 15.8L5.1 11.4Q5.3 10.6 6.2 10.6H12.6Q13.5 10.6 13.7 11.4L14.8 15.8Z" fill="#74c15a"/><circle cx="5.3" cy="10.6" r="0.9" fill="#74c15a"/><circle cx="13.5" cy="10.4" r="0.9" fill="#74c15a"/></svg><div class="t" style="left:579px;top:661px;color:#bbbbbb;transform:scaleX(1.0551);">Fragment (List)</div><svg style="position:absolute;left:559px;top:681px;overflow:visible" width="16" height="16" viewBox="0 0 16 16"><path d="M1.9 4.8L5.9 0.9V4.8Z" fill="#939fa8"/><path d="M7 0.9H12.2V15H1.9V6H7Z" fill="#939fa8"/><path d="M3 16.6L4.6 9.6H14.2L15.8 16.6Z" fill="#3c3f41"/><path d="M4 15.8L5.1 11.4Q5.3 10.6 6.2 10.6H12.6Q13.5 10.6 13.7 11.4L14.8 15.8Z" fill="#74c15a"/><circle cx="5.3" cy="10.6" r="0.9" fill="#74c15a"/><circle cx="13.5" cy="10.4" r="0.9" fill="#74c15a"/></svg><div class="t" style="left:579px;top:680px;color:#bbbbbb;transform:scaleX(1.0444);">Fragment (with ViewModel)</div><svg style="position:absolute;left:559px;top:700px;overflow:visible" width="16" height="16" viewBox="0 0 16 16"><path d="M1.9 4.8L5.9 0.9V4.8Z" fill="#939fa8"/><path d="M7 0.9H12.2V15H1.9V6H7Z" fill="#939fa8"/><path d="M3 16.6L4.6 9.6H14.2L15.8 16.6Z" fill="#3c3f41"/><path d="M4 15.8L5.1 11.4Q5.3 10.6 6.2 10.6H12.6Q13.5 10.6 13.7 11.4L14.8 15.8Z" fill="#74c15a"/><circle cx="5.3" cy="10.6" r="0.9" fill="#74c15a"/><circle cx="13.5" cy="10.4" r="0.9" fill="#74c15a"/></svg><div class="t" style="left:579px;top:699px;color:#bbbbbb;transform:scaleX(1.0996);">Fragment (with a +1 button)</div><svg style="position:absolute;left:559px;top:719px;overflow:visible" width="16" height="16" viewBox="0 0 16 16"><path d="M1.9 4.8L5.9 0.9V4.8Z" fill="#939fa8"/><path d="M7 0.9H12.2V15H1.9V6H7Z" fill="#939fa8"/><path d="M3 16.6L4.6 9.6H14.2L15.8 16.6Z" fill="#3c3f41"/><path d="M4 15.8L5.1 11.4Q5.3 10.6 6.2 10.6H12.6Q13.5 10.6 13.7 11.4L14.8 15.8Z" fill="#74c15a"/><circle cx="5.3" cy="10.6" r="0.9" fill="#74c15a"/><circle cx="13.5" cy="10.4" r="0.9" fill="#74c15a"/></svg><div class="t" style="left:579px;top:718px;color:#bbbbbb;transform:scaleX(1.0323);">Modal Bottom Sheet</div>
</body></html>
